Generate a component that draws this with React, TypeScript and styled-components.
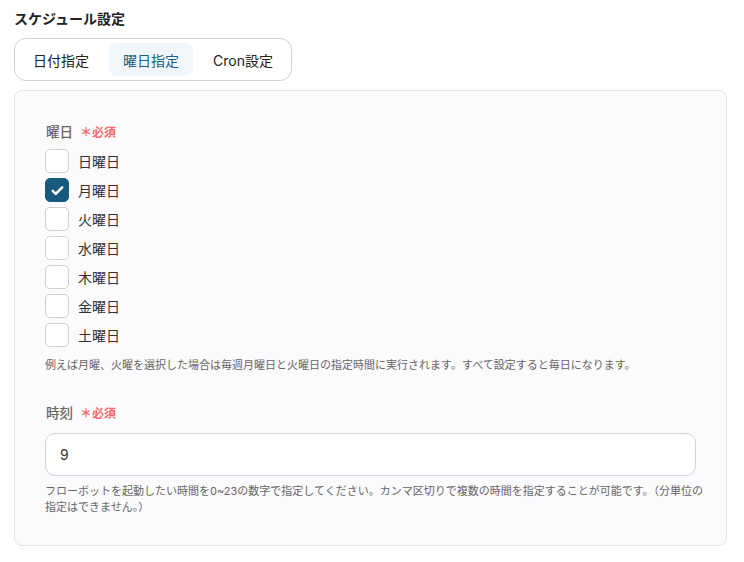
import React, { useState } from 'react';
import styled, { createGlobalStyle } from 'styled-components';

const GlobalStyle = createGlobalStyle`
  body {
    margin: 0;
    background: #ffffff;
    font-family: Inter, 'Noto Sans CJK JP', sans-serif;
    color: #222;
  }
`;

const Page = styled.div`
  padding: 9px 17px 0 14px;
`;

const Title = styled.h2`
  margin: 0;
  font-size: 14px;
  line-height: 20px;
  font-weight: 700;
  color: #222;
`;

const Tabs = styled.div`
  display: inline-flex;
  gap: 6px;
  margin-top: 9px;
  padding: 4px;
  border: 1px solid #cfcfd4;
  border-radius: 12px;
  background: #fff;
`;

const Tab = styled.button<{ $active: boolean }>`
  height: 33px;
  padding: 0 14px;
  border: none;
  border-radius: 8px;
  background: ${p => (p.$active ? '#f1f6fa' : 'transparent')};
  color: ${p => (p.$active ? '#1e5f80' : '#222')};
  font-family: inherit;
  font-size: 14px;
  cursor: pointer;
`;

const Panel = styled.div`
  margin-top: 9px;
  padding: 32px 30px 30px 30px;
  border: 1px solid #e4e4e8;
  border-radius: 8px;
  background: #fbfafc;
`;

const Field = styled.div<{ $gap?: number }>`
  display: flex;
  flex-direction: column;
  margin-top: ${p => p.$gap ?? 0}px;
`;

const Label = styled.div`
  display: flex;
  align-items: baseline;
  gap: 7px;
  padding-left: 1px;
  font-size: 13.5px;
  line-height: 18px;
  font-weight: 500;
  color: #666;
`;

const Required = styled.span`
  font-size: 12px;
  font-weight: 600;
  color: #f26a6a;
`;

const CheckList = styled.div`
  display: flex;
  flex-direction: column;
  gap: 5px;
  margin-top: 7px;
`;

const CheckRow = styled.label`
  display: flex;
  align-items: center;
  gap: 9px;
  font-size: 14px;
  color: #333;
  cursor: pointer;
`;

const Box = styled.span<{ $checked: boolean }>`
  display: flex;
  align-items: center;
  justify-content: center;
  width: 24px;
  height: 24px;
  box-sizing: border-box;
  border-radius: 5px;
  border: 1px solid ${p => (p.$checked ? '#175a7c' : '#cfcfcf')};
  background: ${p => (p.$checked ? '#175a7c' : '#fff')};
`;

const Help = styled.p<{ $top: number }>`
  margin: ${p => p.$top}px -8px 0 0;
  font-size: 11px;
  line-height: 16px;
  color: #666;
`;

const Input = styled.input`
  margin-top: 10px;
  height: 43px;
  box-sizing: border-box;
  padding: 0 14px;
  border: 1px solid #cfd3dc;
  border-radius: 10px;
  background: #fff;
  font-family: inherit;
  font-size: 14px;
  color: #333;
  outline: none;
`;

const days = ['日曜日', '月曜日', '火曜日', '水曜日', '木曜日', '金曜日', '土曜日'];
const tabs = ['日付指定', '曜日指定', 'Cron設定'];

const Check = () => (
  <svg width="15" height="15" viewBox="0 0 24 24" fill="none">
    <path d="M4.5 12.5l4.8 4.8L19.5 7" stroke="#fff" strokeWidth="4" strokeLinecap="round" strokeLinejoin="round" />
  </svg>
);

export default function App() {
  const [tab, setTab] = useState(1);
  const [checked, setChecked] = useState<boolean[]>([false, true, false, false, false, false, false]);
  const [hour, setHour] = useState('9');

  return (
    <Page>
      <GlobalStyle />
      <Title>スケジュール設定</Title>
      <Tabs>
        {tabs.map((t, i) => (
          <Tab key={t} $active={tab === i} onClick={() => setTab(i)}>
            {t}
          </Tab>
        ))}
      </Tabs>
      <Panel>
        <Field>
          <Label>
            曜日 <Required>＊必須</Required>
          </Label>
          <CheckList>
            {days.map((d, i) => (
              <CheckRow
                key={d}
                onClick={() => setChecked(c => c.map((v, j) => (j === i ? !v : v)))}
              >
                <Box $checked={checked[i]}>{checked[i] && <Check />}</Box>
                {d}
              </CheckRow>
            ))}
          </CheckList>
          <Help $top={10}>
            例えば月曜、火曜を選択した場合は毎週月曜日と火曜日の指定時間に実行されます。すべて設定すると毎日になります。
          </Help>
        </Field>
        <Field $gap={31}>
          <Label>
            時刻 <Required>＊必須</Required>
          </Label>
          <Input value={hour} onChange={e => setHour(e.target.value)} />
          <Help $top={7}>
            フローボットを起動したい時間を0~23の数字で指定してください。カンマ区切りで複数の時間を指定することが可能です。（分単位の指定はできません。）
          </Help>
        </Field>
      </Panel>
    </Page>
  );
}
